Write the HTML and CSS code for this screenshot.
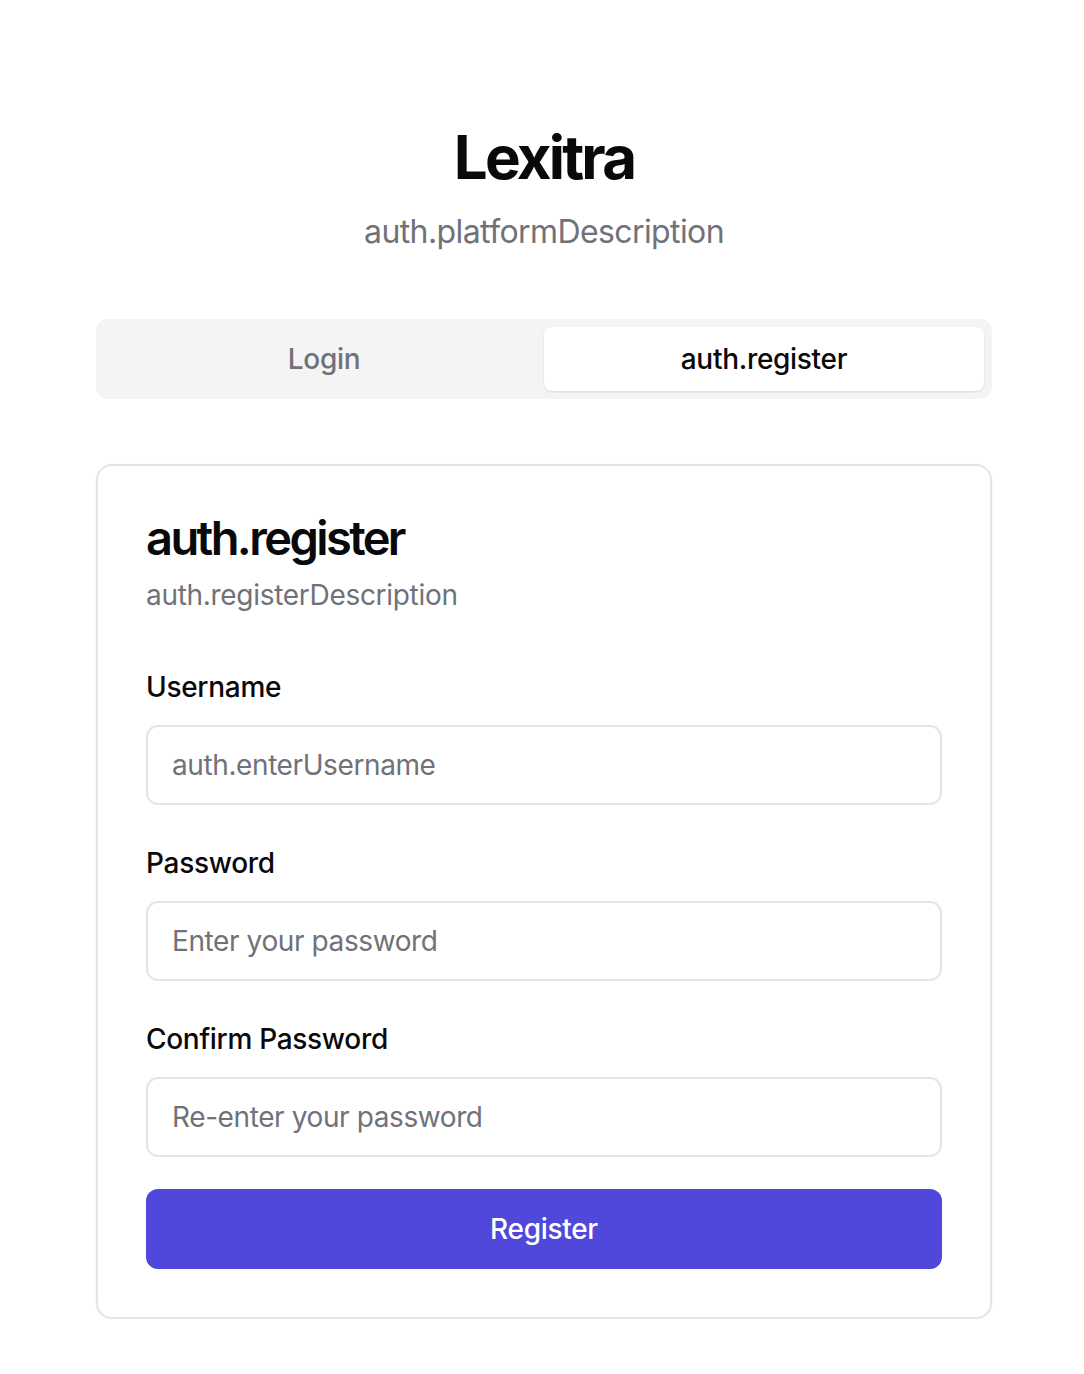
FILE: index.html
```html
<!DOCTYPE html>
<html lang="en">
<head>
<meta charset="utf-8">
<title>Lexitra</title>
<link rel="stylesheet" href="styles.css">
</head>
<body>
<main class="page">
  <div class="wrap">
    <header class="brand">
      <h1 class="brand-title">Lexitra</h1>
      <p class="brand-sub">auth.platformDescription</p>
    </header>
    <div class="tabs">
      <button class="tab">Login</button>
      <button class="tab tab-active">auth.register</button>
    </div>
    <section class="card">
      <div class="card-head">
        <h2 class="card-title">auth.register</h2>
        <p class="card-desc">auth.registerDescription</p>
      </div>
      <form class="form">
        <div class="field">
          <label class="label" for="u">Username</label>
          <input class="input" id="u" type="text" placeholder="auth.enterUsername">
        </div>
        <div class="field">
          <label class="label" for="p">Password</label>
          <input class="input" id="p" type="password" placeholder="Enter your password">
        </div>
        <div class="field">
          <label class="label" for="c">Confirm Password</label>
          <input class="input" id="c" type="password" placeholder="Re-enter your password">
        </div>
        <button class="submit" type="button">Register</button>
      </form>
    </section>
  </div>
</main>
</body>
</html>
```

FILE: styles.css
```css
* { box-sizing: border-box; }
html, body { margin: 0; padding: 0; background: #ffffff; }
body {
  font-family: Inter, "Noto Sans", "Liberation Sans", sans-serif;
  color: #09090b;
}
.page {
  display: flex;
  justify-content: center;
  padding-top: 112px;
}
.wrap {
  width: 896px;
  margin-left: 4px;
}
.brand { text-align: center; }
.brand-title {
  margin: 0;
  font-size: 60px;
  line-height: 90px;
  font-weight: 700;
  letter-spacing: -2.8px;
}
.brand-sub {
  margin: 0;
  font-size: 32px;
  line-height: 60px;
  color: #71717a;
  letter-spacing: -0.6px;
}
.tabs {
  margin-top: 57px;
  height: 80px;
  background: #f4f4f5;
  border-radius: 12px;
  padding: 8px;
  display: grid;
  grid-template-columns: 1fr 1fr;
}
.tab {
  border: 0;
  background: transparent;
  font-family: inherit;
  font-size: 28px;
  font-weight: 500;
  color: #71717a;
  border-radius: 8px;
  padding: 0;
  letter-spacing: -0.3px;
}
.tab-active {
  background: #ffffff;
  color: #09090b;
  box-shadow: 0 1px 3px rgba(0,0,0,0.08), 0 1px 2px rgba(0,0,0,0.04);
}
.card {
  margin-top: 65px;
  border: 2px solid #e4e4e7;
  border-radius: 16px;
  padding: 47px 48px 48px;
  box-shadow: 0 1px 3px rgba(0,0,0,0.05);
}
.card-head { display: flex; flex-direction: column; gap: 12px; }
.card-title {
  margin: 0;
  font-size: 47px;
  line-height: 50px;
  font-weight: 600;
  letter-spacing: -2.6px;
}
.card-desc {
  margin: 0;
  font-size: 28px;
  line-height: 40px;
  color: #71717a;
  letter-spacing: -0.3px;
}
.form {
  margin-top: 52px;
  display: flex;
  flex-direction: column;
  gap: 38px;
}
.field { display: flex; flex-direction: column; gap: 18px; }
.label {
  font-size: 28px;
  line-height: 40px;
  font-weight: 500;
  letter-spacing: -0.3px;
}
.input {
  height: 80px;
  width: 100%;
  border: 2px solid #e4e4e7;
  border-radius: 12px;
  padding: 0 24px;
  font-family: inherit;
  font-size: 28px;
  color: #09090b;
  background: #ffffff;
  outline: none;
  letter-spacing: -0.4px;
}
.input::placeholder { color: #71717a; }
.submit {
  margin-top: -6px;
  height: 80px;
  border: 0;
  border-radius: 12px;
  background: #5048db;
  color: #ffffff;
  font-family: inherit;
  font-size: 28px;
  font-weight: 500;
  letter-spacing: -0.3px;
}
```
